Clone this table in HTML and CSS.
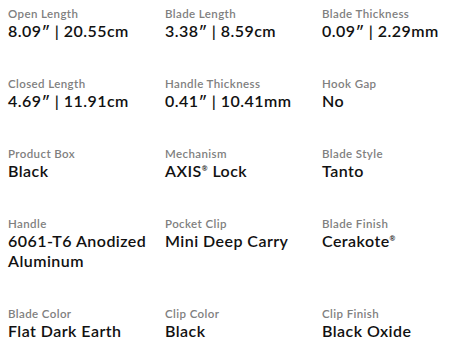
FILE: index.html
```html
<!DOCTYPE html>
<html>
<head>
<meta charset="utf-8">
<link rel="stylesheet" href="styles.css">
</head>
<body>
<div class="specs">
  <div class="spec"><div class="label">Open Length</div><div class="value">8.09″ | 20.55cm</div></div>
  <div class="spec"><div class="label">Blade Length</div><div class="value">3.38″ | 8.59cm</div></div>
  <div class="spec"><div class="label">Blade Thickness</div><div class="value">0.09″ | 2.29mm</div></div>
  <div class="spec"><div class="label">Closed Length</div><div class="value">4.69″ | 11.91cm</div></div>
  <div class="spec"><div class="label">Handle Thickness</div><div class="value">0.41″ | 10.41mm</div></div>
  <div class="spec"><div class="label">Hook Gap</div><div class="value">No</div></div>
  <div class="spec"><div class="label">Product Box</div><div class="value">Black</div></div>
  <div class="spec"><div class="label">Mechanism</div><div class="value">AXIS<sup>®</sup> Lock</div></div>
  <div class="spec"><div class="label">Blade Style</div><div class="value">Tanto</div></div>
  <div class="spec"><div class="label">Handle</div><div class="value">6061-T6 Anodized Aluminum</div></div>
  <div class="spec"><div class="label">Pocket Clip</div><div class="value">Mini Deep Carry</div></div>
  <div class="spec"><div class="label">Blade Finish</div><div class="value">Cerakote<sup>®</sup></div></div>
  <div class="spec"><div class="label">Blade Color</div><div class="value">Flat Dark Earth</div></div>
  <div class="spec"><div class="label">Clip Color</div><div class="value">Black</div></div>
  <div class="spec"><div class="label">Clip Finish</div><div class="value">Black Oxide</div></div>
</div>
</body>
</html>
```

FILE: styles.css
```css
html, body {
  margin: 0;
  padding: 0;
  background: #fff;
}
body {
  font-family: Lato, "Liberation Sans", sans-serif;
}
.specs {
  display: grid;
  grid-template-columns: 157px 157px 138px;
  row-gap: 35px;
  padding: 6px 0 0 8px;
}
.label {
  font-size: 11.5px;
  line-height: 15px;
  color: #808080;
  font-weight: 600;
  letter-spacing: 0.4px;
}
.value {
  font-size: 16px;
  line-height: 20px;
  color: #111;
  font-weight: 600;
  letter-spacing: 0.45px;
  padding-right: 6px;
}
.value sup {
  font-size: 7px;
  vertical-align: 6px;
  line-height: 0;
}
```
